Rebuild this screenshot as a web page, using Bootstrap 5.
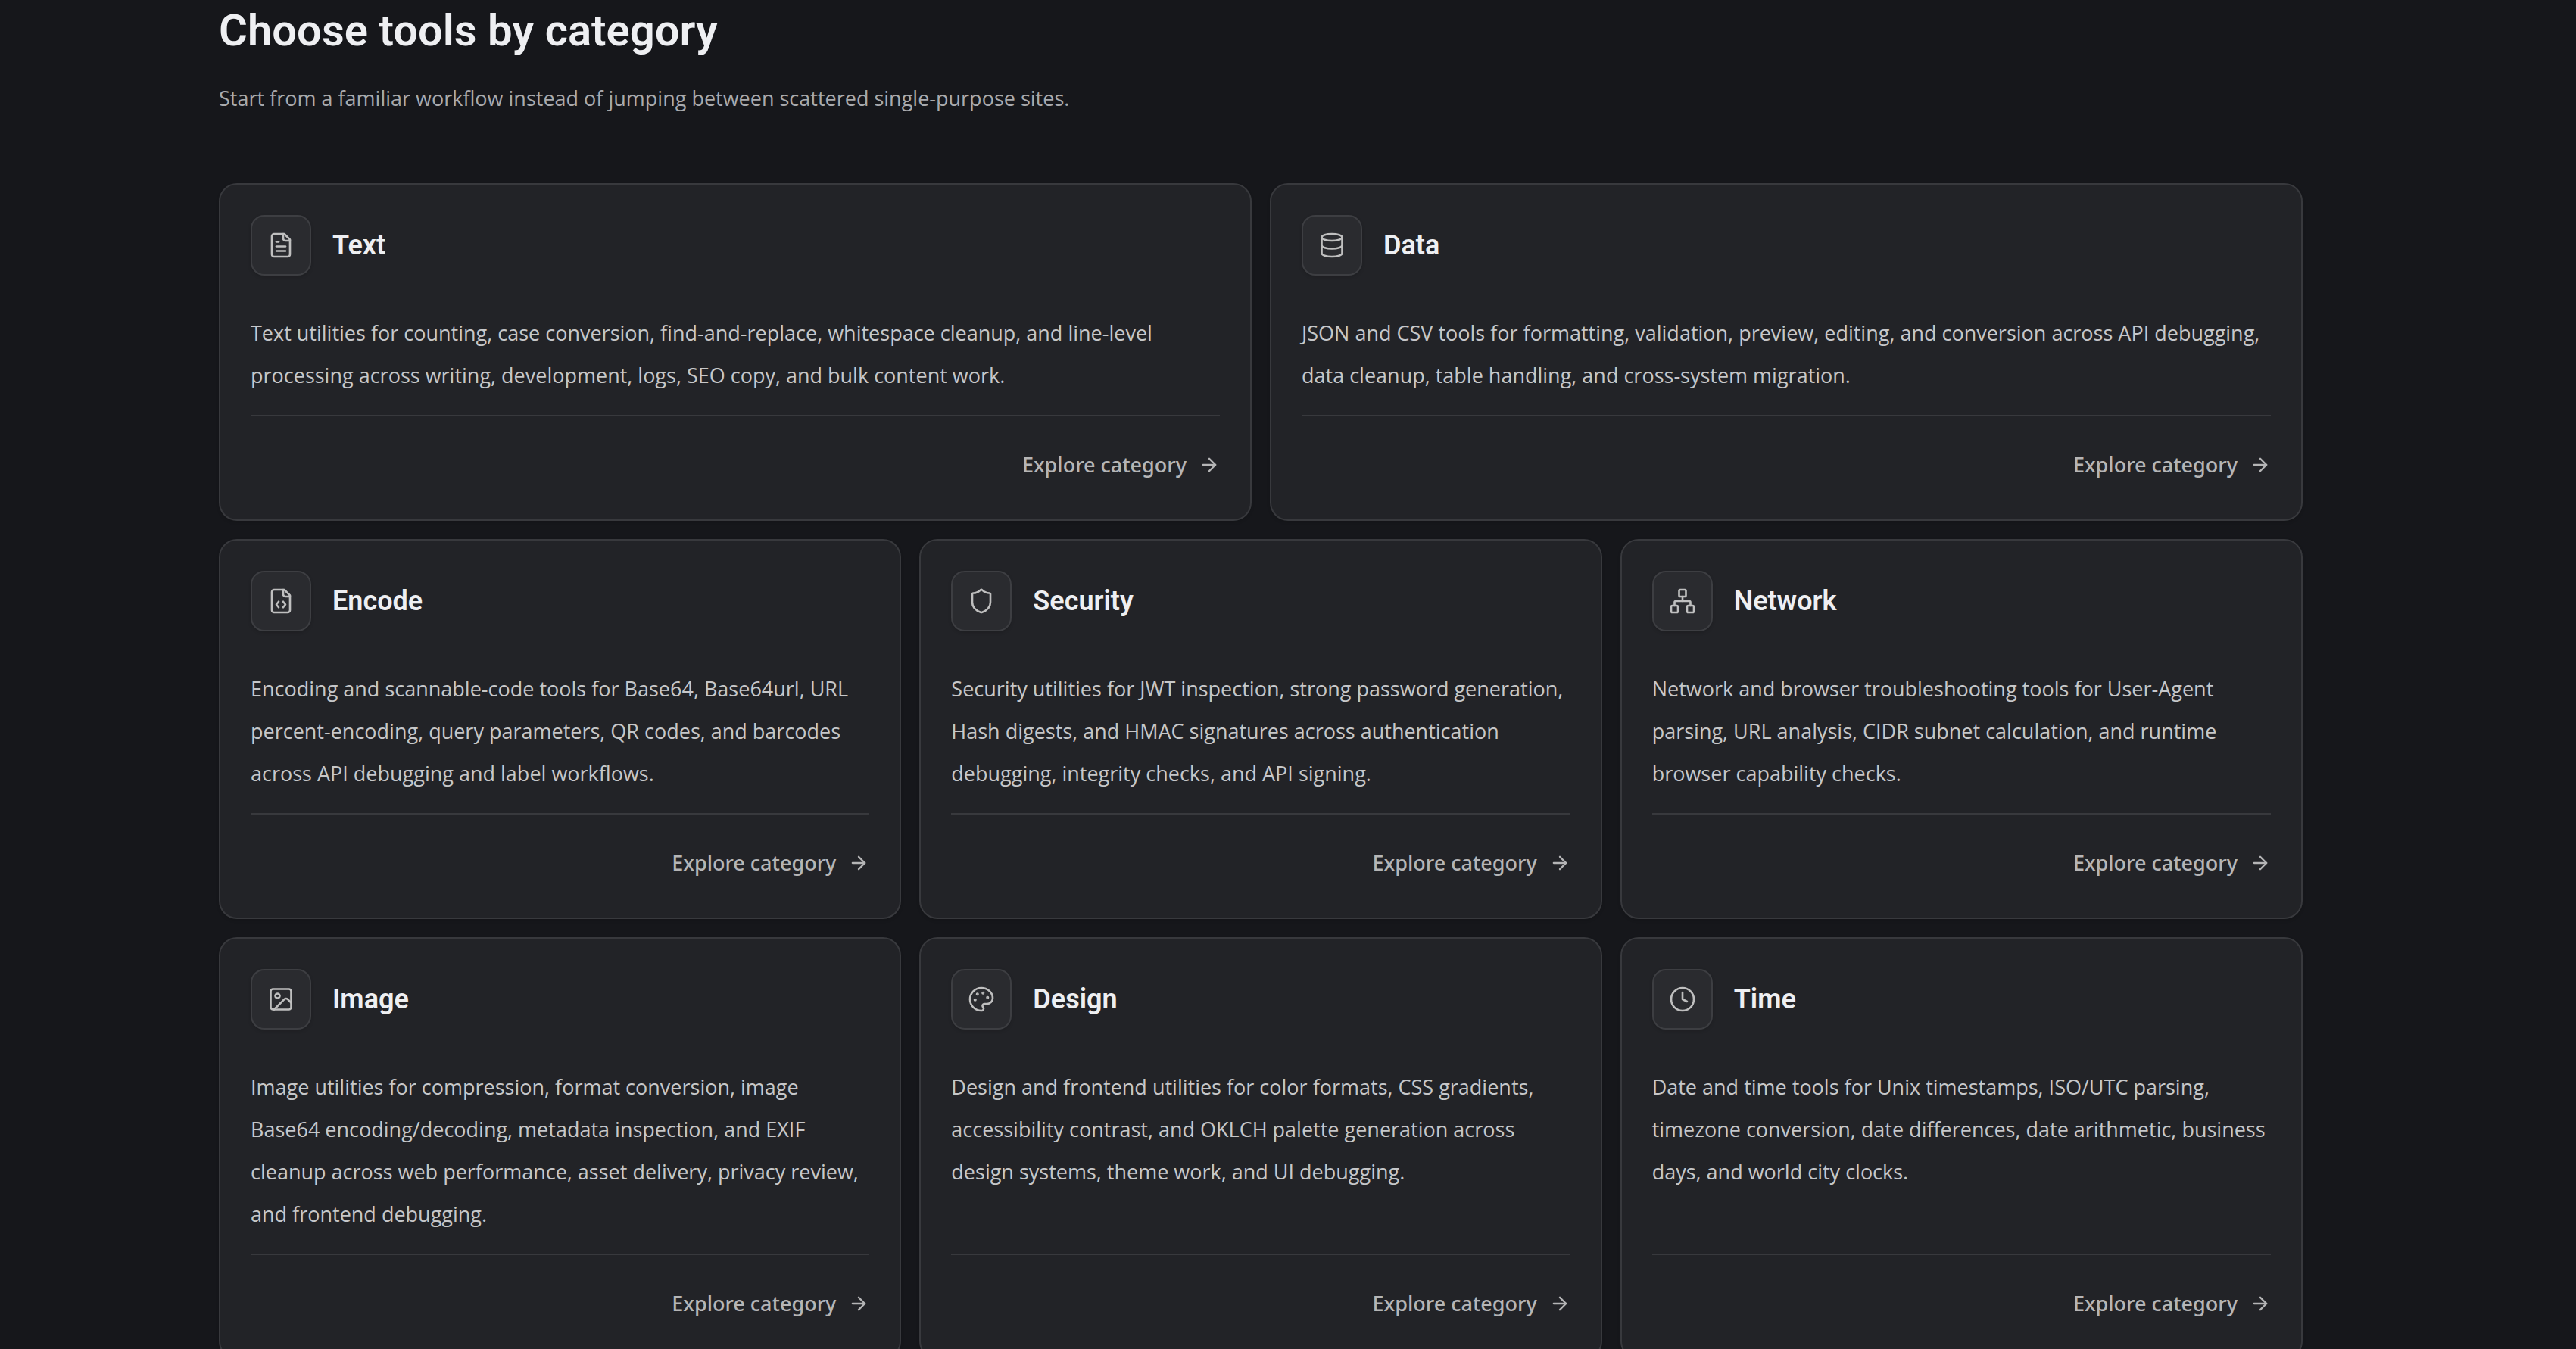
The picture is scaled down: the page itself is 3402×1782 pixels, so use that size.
<!DOCTYPE html>
<html lang="en" data-bs-theme="dark">
<head>
<meta charset="utf-8">
<meta name="viewport" content="width=device-width, initial-scale=1">
<title>Choose tools by category</title>
<link href="https://cdn.jsdelivr.net/npm/bootstrap@5.3.0/dist/css/bootstrap.min.css" rel="stylesheet">
<style>
  body { background: #16171b; color: #eeeff2; font-family: "Open Sans", "Noto Sans", sans-serif; font-size: 27px; line-height: 56px; }
  .page-wrap { padding: 8px 72px 48px 0; }
  .page-inner { max-width: 2752px; }
  .page-title, .tool-name { font-family: Roboto, "Open Sans", sans-serif; font-weight: 600; color: #eeeff2; }
  .page-title { font-size: 58px; line-height: 64px; margin-bottom: 30px; }
  .page-intro { color: #a9aaad; margin-bottom: 84px; }
  .tool-grid { --bs-gutter-x: 24px; --bs-gutter-y: 24px; }
  .tool-card { --bs-card-bg: #222327; --bs-card-border-color: #38393d; --bs-card-border-width: 2px; --bs-card-border-radius: 24px; --bs-card-inner-border-radius: 22px; --bs-card-color: #c6c7c9; box-shadow: 0 2px 4px rgba(0, 0, 0, .12); }
  .tool-card .card-body { padding: 40px; }
  .tool-head { gap: 28px; margin-bottom: 48px; }
  .tool-icon { width: 80px; height: 80px; border: 2px solid #3d3e42; border-radius: 18px; background: #2a2b2f; color: #bfbfbf; box-shadow: 0 2px 4px rgba(0, 0, 0, .15); }
  .tool-icon svg { width: 36px; height: 36px; stroke-width: 1.75; }
  .tool-name { font-size: 36px; line-height: 50px; }
  .tool-foot { border-top: 2px solid #38393d; padding-top: 32px; }
  .tool-link { gap: 16px; font-family: "Noto Sans", sans-serif; line-height: 64px; font-weight: 500; color: #b5b5b6; }
  .tool-link:hover { color: #eeeff2; }
  .tool-link svg { width: 28px; height: 28px; stroke-width: 2; }
  svg { fill: none; stroke: currentColor; stroke-linecap: round; stroke-linejoin: round; }
</style>
</head>
<body>
<main class="page-wrap">
  <div class="page-inner mx-auto">
    <h1 class="page-title">Choose tools by category</h1>
    <p class="page-intro">Start from a familiar workflow instead of jumping between scattered single-purpose sites.</p>

    <div class="row tool-grid">
      <div class="col-6">
        <article class="card tool-card h-100"><div class="card-body d-flex flex-column">
          <div class="tool-head d-flex align-items-center">
            <div class="tool-icon d-flex align-items-center justify-content-center flex-shrink-0"><svg viewBox="0 0 24 24" aria-hidden="true"><path d="M15 2H6a2 2 0 0 0-2 2v16a2 2 0 0 0 2 2h12a2 2 0 0 0 2-2V7Z"/><path d="M14 2v4a2 2 0 0 0 2 2h4"/><path d="M10 9H8"/><path d="M16 13H8"/><path d="M16 17H8"/></svg></div>
            <h2 class="tool-name mb-0">Text</h2>
          </div>
          <p class="mb-4">Text utilities for counting, case conversion, find-and-replace, whitespace cleanup, and line-level processing across writing, development, logs, SEO copy, and bulk content work.</p>
          <div class="tool-foot mt-auto d-flex justify-content-end"><a class="tool-link d-flex align-items-center text-decoration-none" href="#text">Explore category<svg viewBox="0 0 24 24" aria-hidden="true"><path d="M5 12h14"/><path d="m12 5 7 7-7 7"/></svg></a></div>
        </div></article>
      </div>
      <div class="col-6">
        <article class="card tool-card h-100"><div class="card-body d-flex flex-column">
          <div class="tool-head d-flex align-items-center">
            <div class="tool-icon d-flex align-items-center justify-content-center flex-shrink-0"><svg viewBox="0 0 24 24" aria-hidden="true"><ellipse cx="12" cy="5" rx="9" ry="3"/><path d="M3 5v14a9 3 0 0 0 18 0V5"/><path d="M3 12a9 3 0 0 0 18 0"/></svg></div>
            <h2 class="tool-name mb-0">Data</h2>
          </div>
          <p class="mb-4">JSON and CSV tools for formatting, validation, preview, editing, and conversion across API debugging, data cleanup, table handling, and cross-system migration.</p>
          <div class="tool-foot mt-auto d-flex justify-content-end"><a class="tool-link d-flex align-items-center text-decoration-none" href="#data">Explore category<svg viewBox="0 0 24 24" aria-hidden="true"><path d="M5 12h14"/><path d="m12 5 7 7-7 7"/></svg></a></div>
        </div></article>
      </div>

      <div class="col-4">
        <article class="card tool-card h-100"><div class="card-body d-flex flex-column">
          <div class="tool-head d-flex align-items-center">
            <div class="tool-icon d-flex align-items-center justify-content-center flex-shrink-0"><svg viewBox="0 0 24 24" aria-hidden="true"><path d="M15 2H6a2 2 0 0 0-2 2v16a2 2 0 0 0 2 2h12a2 2 0 0 0 2-2V7Z"/><path d="M14 2v4a2 2 0 0 0 2 2h4"/><path d="M10 12.5 8 15l2 2.5"/><path d="m14 12.5 2 2.5-2 2.5"/></svg></div>
            <h2 class="tool-name mb-0">Encode</h2>
          </div>
          <p class="mb-4">Encoding and scannable-code tools for Base64, Base64url, URL percent-encoding, query parameters, QR codes, and barcodes across API debugging and label workflows.</p>
          <div class="tool-foot mt-auto d-flex justify-content-end"><a class="tool-link d-flex align-items-center text-decoration-none" href="#encode">Explore category<svg viewBox="0 0 24 24" aria-hidden="true"><path d="M5 12h14"/><path d="m12 5 7 7-7 7"/></svg></a></div>
        </div></article>
      </div>
      <div class="col-4">
        <article class="card tool-card h-100"><div class="card-body d-flex flex-column">
          <div class="tool-head d-flex align-items-center">
            <div class="tool-icon d-flex align-items-center justify-content-center flex-shrink-0"><svg viewBox="0 0 24 24" aria-hidden="true"><path d="M20 13c0 5-3.500 7.500-7.660 8.950a1 1 0 0 1-.67-.01C7.500 20.500 4 18 4 13V6a1 1 0 0 1 1-1c2 0 4.500-1.200 6.240-2.720a1.170 1.170 0 0 1 1.520 0C14.510 3.810 17 5 19 5a1 1 0 0 1 1 1z"/></svg></div>
            <h2 class="tool-name mb-0">Security</h2>
          </div>
          <p class="mb-4">Security utilities for JWT inspection, strong password generation, Hash digests, and HMAC signatures across authentication debugging, integrity checks, and API signing.</p>
          <div class="tool-foot mt-auto d-flex justify-content-end"><a class="tool-link d-flex align-items-center text-decoration-none" href="#security">Explore category<svg viewBox="0 0 24 24" aria-hidden="true"><path d="M5 12h14"/><path d="m12 5 7 7-7 7"/></svg></a></div>
        </div></article>
      </div>
      <div class="col-4">
        <article class="card tool-card h-100"><div class="card-body d-flex flex-column">
          <div class="tool-head d-flex align-items-center">
            <div class="tool-icon d-flex align-items-center justify-content-center flex-shrink-0"><svg viewBox="0 0 24 24" aria-hidden="true"><rect x="16" y="16" width="6" height="6" rx="1"/><rect x="2" y="16" width="6" height="6" rx="1"/><rect x="9" y="2" width="6" height="6" rx="1"/><path d="M5 16v-3a1 1 0 0 1 1-1h12a1 1 0 0 1 1 1v3"/><path d="M12 12V8"/></svg></div>
            <h2 class="tool-name mb-0">Network</h2>
          </div>
          <p class="mb-4">Network and browser troubleshooting tools for User-Agent parsing, URL analysis, CIDR subnet calculation, and runtime browser capability checks.</p>
          <div class="tool-foot mt-auto d-flex justify-content-end"><a class="tool-link d-flex align-items-center text-decoration-none" href="#network">Explore category<svg viewBox="0 0 24 24" aria-hidden="true"><path d="M5 12h14"/><path d="m12 5 7 7-7 7"/></svg></a></div>
        </div></article>
      </div>

      <div class="col-4">
        <article class="card tool-card h-100"><div class="card-body d-flex flex-column">
          <div class="tool-head d-flex align-items-center">
            <div class="tool-icon d-flex align-items-center justify-content-center flex-shrink-0"><svg viewBox="0 0 24 24" aria-hidden="true"><rect x="3" y="3" width="18" height="18" rx="2"/><circle cx="9" cy="9" r="2"/><path d="m21 15-3.086-3.086a2 2 0 0 0-2.828 0L6 21"/></svg></div>
            <h2 class="tool-name mb-0">Image</h2>
          </div>
          <p class="mb-4">Image utilities for compression, format conversion, image Base64 encoding/decoding, metadata inspection, and EXIF cleanup across web performance, asset delivery, privacy review, and frontend debugging.</p>
          <div class="tool-foot mt-auto d-flex justify-content-end"><a class="tool-link d-flex align-items-center text-decoration-none" href="#image">Explore category<svg viewBox="0 0 24 24" aria-hidden="true"><path d="M5 12h14"/><path d="m12 5 7 7-7 7"/></svg></a></div>
        </div></article>
      </div>
      <div class="col-4">
        <article class="card tool-card h-100"><div class="card-body d-flex flex-column">
          <div class="tool-head d-flex align-items-center">
            <div class="tool-icon d-flex align-items-center justify-content-center flex-shrink-0"><svg viewBox="0 0 24 24" aria-hidden="true"><path d="M12 22a1 1 0 0 1 0-20 10 9 0 0 1 10 9 5 5 0 0 1-5 5h-2.250a1.750 1.750 0 0 0-1.400 2.800l.3.400a1.750 1.750 0 0 1-1.400 2.800z"/><g fill="currentColor"><circle cx="13.500" cy="6.500" r=".5"/><circle cx="17.500" cy="10.500" r=".5"/><circle cx="6.500" cy="12.500" r=".5"/><circle cx="8.500" cy="7.500" r=".5"/></g></svg></div>
            <h2 class="tool-name mb-0">Design</h2>
          </div>
          <p class="mb-4">Design and frontend utilities for color formats, CSS gradients, accessibility contrast, and OKLCH palette generation across design systems, theme work, and UI debugging.</p>
          <div class="tool-foot mt-auto d-flex justify-content-end"><a class="tool-link d-flex align-items-center text-decoration-none" href="#design">Explore category<svg viewBox="0 0 24 24" aria-hidden="true"><path d="M5 12h14"/><path d="m12 5 7 7-7 7"/></svg></a></div>
        </div></article>
      </div>
      <div class="col-4">
        <article class="card tool-card h-100"><div class="card-body d-flex flex-column">
          <div class="tool-head d-flex align-items-center">
            <div class="tool-icon d-flex align-items-center justify-content-center flex-shrink-0"><svg viewBox="0 0 24 24" aria-hidden="true"><circle cx="12" cy="12" r="10"/><path d="M12 6v6l4 2"/></svg></div>
            <h2 class="tool-name mb-0">Time</h2>
          </div>
          <p class="mb-4">Date and time tools for Unix timestamps, ISO/UTC parsing, timezone conversion, date differences, date arithmetic, business days, and world city clocks.</p>
          <div class="tool-foot mt-auto d-flex justify-content-end"><a class="tool-link d-flex align-items-center text-decoration-none" href="#time">Explore category<svg viewBox="0 0 24 24" aria-hidden="true"><path d="M5 12h14"/><path d="m12 5 7 7-7 7"/></svg></a></div>
        </div></article>
      </div>
    </div>
  </div>
</main>
<script src="https://cdn.jsdelivr.net/npm/bootstrap@5.3.0/dist/js/bootstrap.bundle.min.js"></script>
</body>
</html>
